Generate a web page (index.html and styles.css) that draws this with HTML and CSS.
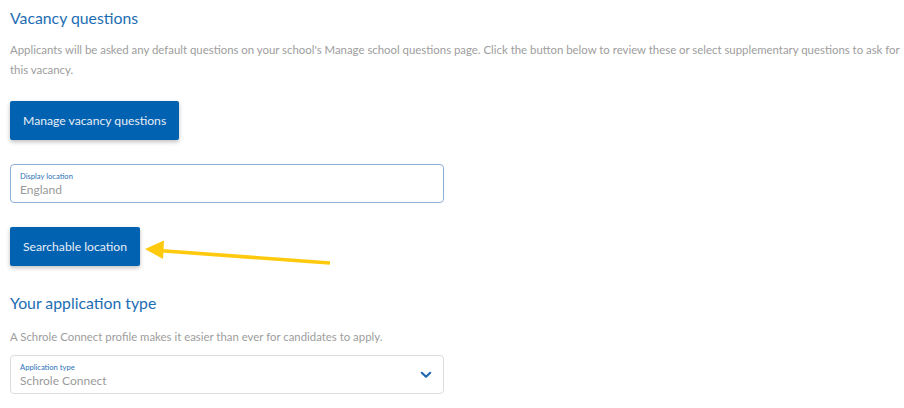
FILE: index.html
```html
<!DOCTYPE html>
<html lang="en">
<head>
<meta charset="utf-8">
<title>Vacancy questions</title>
<link rel="stylesheet" href="styles.css">
</head>
<body>
<main class="page">
  <section class="section">
    <h2 class="heading">Vacancy questions</h2>
    <p class="intro">Applicants will be asked any default questions on your school's Manage school questions page. Click the button below to review these or select supplementary questions to ask for this vacancy.</p>
    <button class="btn" type="button">Manage vacancy questions</button>
  </section>

  <div class="field field-focus">
    <span class="field-label">Display location</span>
    <span class="field-value">England</span>
  </div>

  <div class="btn-row">
    <button class="btn" type="button">Searchable location</button>
    <svg class="arrow" width="200" height="34" viewBox="0 0 200 34" aria-hidden="true">
      <line x1="18" y1="10.5" x2="190" y2="23" stroke="#ffc90e" stroke-width="3.6" stroke-linecap="butt"/>
      <polygon points="5,9 24,0.5 23,19" fill="#ffc90e"/>
    </svg>
  </div>

  <section class="section section-2">
    <h2 class="heading">Your application type</h2>
    <p class="intro intro-2">A Schrole Connect profile makes it easier than ever for candidates to apply.</p>
    <div class="field field-select">
      <span class="field-label">Application type</span>
      <span class="field-value">Schrole Connect</span>
      <svg class="chevron" width="12" height="8" viewBox="0 0 12 8" aria-hidden="true">
        <path d="M1.8 1.8 L6 5.8 L10.2 1.8" fill="none" stroke="#1f6ab0" stroke-width="2.2" stroke-linecap="round" stroke-linejoin="round"/>
      </svg>
    </div>
  </section>
</main>
</body>
</html>
```

FILE: styles.css
```css
html, body {
  margin: 0;
  padding: 0;
  background: #ffffff;
}

body {
  font-family: Lato, "Open Sans", "Liberation Sans", sans-serif;
  color: #999999;
}

.page {
  padding: 8px 10px 0 10px;
  width: 890px;
  display: flex;
  flex-direction: column;
  align-items: flex-start;
}

.section {
  display: flex;
  flex-direction: column;
  align-items: flex-start;
}

.heading {
  margin: 0;
  font-size: 15.8px;
  line-height: 20px;
  font-weight: 400;
  color: #1c6db3;
}

.intro {
  margin: 12px 0 0 0;
  font-size: 11.4px;
  line-height: 20px;
  color: #9d9d9d;
  width: 890px;
}

.btn {
  margin-top: 21px;
  height: 39px;
  padding: 0 13px;
  border: none;
  border-radius: 2px;
  background: #0062b1;
  color: #e8eef6;
  font-family: inherit;
  font-size: 12.2px;
  box-shadow: 0 2px 4px rgba(0, 0, 0, 0.25);
}

.field {
  box-sizing: border-box;
  width: 434px;
  height: 39px;
  margin-top: 24px;
  border: 1px solid #8fb0d3;
  border-radius: 4px;
  padding: 6px 9px 0 9px;
  display: flex;
  flex-direction: column;
  position: relative;
}

.field-label {
  font-size: 7.6px;
  line-height: 10px;
  color: #2b72b8;
}

.field-value {
  font-size: 12px;
  line-height: 18px;
  color: #9a9a9a;
}

.btn-row {
  position: relative;
  margin-top: 24px;
}

.btn-row .btn {
  margin-top: 0;
}

.arrow {
  position: absolute;
  left: 130px;
  top: 13px;
}

.section-2 {
  margin-top: 27px;
}

.intro-2 {
  margin-top: 14px;
}

.field-select {
  margin-top: 8px;
  border-color: #dcdcdc;
}

.chevron {
  position: absolute;
  right: 11px;
  top: 15px;
}
```
